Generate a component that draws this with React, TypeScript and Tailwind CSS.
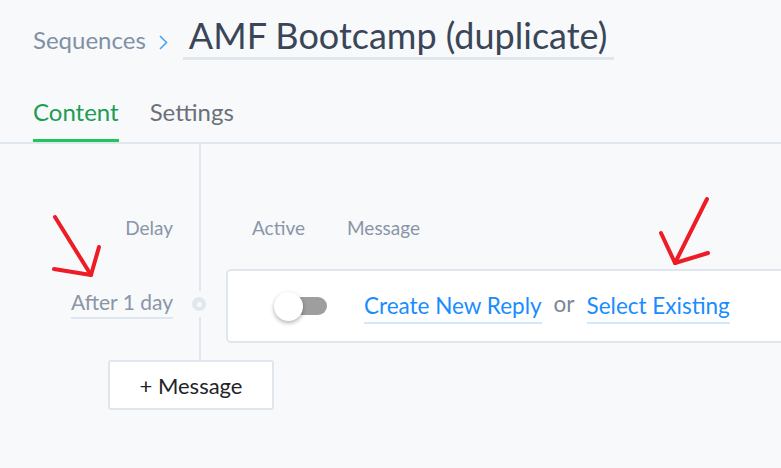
function Toggle() {
  return (
    <div className="relative w-[53px] h-[29px] shrink-0">
      <div className="absolute left-[9px] top-[5px] w-[44px] h-[18px] rounded-full bg-[#9e9e9e]" />
      <div className="absolute left-0 top-0 w-[29px] h-[29px] rounded-full bg-white shadow-[0_2px_4px_rgba(0,0,0,0.3)]" />
    </div>
  );
}

export default function App() {
  return (
    <div className="relative w-[781px] h-[468px] overflow-hidden bg-[#f7f9fb] font-['Lato',sans-serif]">
      {/* header */}
      <div className="flex items-baseline pl-[33px] pt-[13px] h-[60px]">
        <span className="text-[24px] leading-[28px] text-[#8290a4]">Sequences</span>
        <svg width="9" height="15" viewBox="0 0 9 15" className="ml-[13px] self-start mt-[22px]">
          <path d="M1 1 L7.5 7.5 L1 14" fill="none" stroke="#4ba3f2" strokeWidth={1.6} />
        </svg>
        <div className="ml-[15px] pl-[6px] pr-[7px] border-b-[3px] border-[#e0e6ee] text-[36px] leading-[44px] text-[#3a4658]">
          AMF Bootcamp (duplicate)
        </div>
      </div>

      {/* tabs */}
      <div className="flex pl-[33px] mt-[38px] border-b-2 border-[#e1e7ef]">
        <div className="pb-[13px] border-b-[3px] border-[#1fc65c] text-[24px] leading-[28px] text-[#1d9d54]">Content</div>
        <div className="ml-[31px] pb-[13px] text-[24px] leading-[28px] text-[#6c7078]">Settings</div>
      </div>

      {/* sequence body */}
      <div className="flex h-[125px]">
        <div className="w-[201px] shrink-0 border-r-2 border-[#e1e7ef] pt-[74px] pr-[26px] text-right text-[19px] leading-[20px] text-[#8a95a7]">
          Delay
        </div>
        <div className="flex pl-[51px] pt-[74px] text-[19px] leading-[20px] text-[#8a95a7]">
          <span className="w-[95px]">Active</span>
          <span>Message</span>
        </div>
      </div>

      <div className="flex h-[74px]">
        <div className="relative w-[201px] shrink-0 border-r-2 border-[#e1e7ef] flex justify-end items-start pr-[26px] pt-[20px]">
          <span className="text-[21px] leading-[25px] text-[#8a95a7] pb-[3px] border-b-2 border-[#dfe6ee]">After 1 day</span>
          <div className="absolute right-[-7px] top-[28px] w-[14px] h-[14px] rounded-full bg-[#e1e7ef] ring-[6px] ring-[#f7f9fb] flex items-center justify-center">
            <div className="w-[5px] h-[5px] rounded-full bg-[#f7f9fb]" />
          </div>
        </div>
        <div className="ml-[25px] w-[600px] shrink-0 h-[74px] rounded-[5px] border-2 border-[#e0e6ee] bg-white flex items-center pl-[46px]">
          <Toggle />
          <span className="ml-[37px] mt-[4px] text-[22.5px] leading-[26px] text-[#1a8cff] pb-[3px] border-b-2 border-[#d4e8fc]">Create New Reply</span>
          <span className="ml-[12px] mb-[4px] text-[22.5px] leading-[26px] text-[#7d8696]">or</span>
          <span className="ml-[12px] mt-[4px] text-[22.5px] leading-[26px] text-[#1a8cff] pb-[3px] border-b-2 border-[#d4e8fc]">Select Existing</span>
        </div>
      </div>

      <div className="h-[17px] w-[201px] border-r-2 border-[#e1e7ef]" />

      <button className="ml-[108px] w-[166px] h-[50px] rounded-[3px] border-2 border-[#e0e6ee] bg-white text-[22px] text-[#222428] flex items-center justify-center">
        + Message
      </button>

      {/* red annotation arrows */}
      <svg className="absolute inset-0 pointer-events-none" width={781} height={468} viewBox="0 0 781 468">
        <g fill="none" stroke="#ee1c25" strokeWidth={4} strokeLinecap="round" strokeLinejoin="round">
          <path d="M55 217 L91 275" />
          <path d="M54 269 L91 275 L99 247" />
          <path d="M707 199 L675 263" />
          <path d="M661 233 L675 263 L708 253" />
        </g>
      </svg>
    </div>
  );
}
